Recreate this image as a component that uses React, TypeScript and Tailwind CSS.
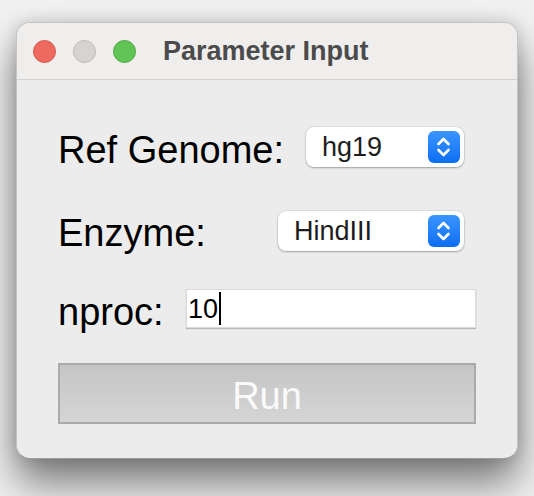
import React from "react";

const Chevrons = () => (
  <svg width="32" height="32" viewBox="0 0 32 32" fill="none">
    <path d="M10.5 13 L15.5 8 L20.5 13" stroke="white" strokeWidth="2.6" strokeLinecap="round" strokeLinejoin="round" />
    <path d="M10.5 19 L15.5 24 L20.5 19" stroke="white" strokeWidth="2.6" strokeLinecap="round" strokeLinejoin="round" />
  </svg>
);

const Popup = ({ value, width }: { value: string; width: string }) => (
  <div
    className={`ml-auto mr-[12px] ${width} h-[40px] flex items-center justify-between bg-white rounded-[8px] shadow-[0_0_0_0.5px_rgba(0,0,0,0.12),0_1px_2px_rgba(0,0,0,0.28)] pl-[16px] pr-[4px]`}
  >
    <span className="text-[27px] leading-none pt-[1px] text-[#1d1d1d]">{value}</span>
    <div className="w-[32px] h-[32px] rounded-[6px] bg-gradient-to-b from-[#3a95ff] to-[#0a6ef2] flex items-center justify-center">
      <Chevrons />
    </div>
  </div>
);

const App = () => {
  return (
    <div className="w-[534px] h-[496px] bg-[#f1f1f1] pt-[22px] pl-[16px] font-['Liberation_Sans',Arial,sans-serif]">
      <div className="w-[502px] h-[437px] rounded-[14px] bg-[#ececec] border border-[#c4c4c4] border-b-[#9c9c9c] overflow-hidden shadow-[0_24px_40px_rgba(0,0,0,0.5),0_0_16px_rgba(0,0,0,0.14)] flex flex-col">
        <div className="h-[57px] bg-[#efeeed] border-b border-[#d2d2d2] flex items-center pl-[16px]">
          <div className="flex gap-[17px]">
            <span className="w-[23px] h-[23px] rounded-full bg-[#ee6a5f] border border-[#d4574c]" />
            <span className="w-[23px] h-[23px] rounded-full bg-[#d5d4d3] border border-[#bcbbba]" />
            <span className="w-[23px] h-[23px] rounded-full bg-[#61c454] border border-[#4fa843]" />
          </div>
          <span className="ml-[27px] text-[27px] font-bold leading-none text-[#4b4b4b]">Parameter Input</span>
        </div>

        <div className="flex flex-col px-[41px] pt-[47px]">
          <div className="flex items-center h-[40px]">
            <span className="text-[38px] leading-none pt-[6px] text-black">Ref Genome:</span>
            <Popup value="hg19" width="w-[158px]" />
          </div>

          <div className="flex items-center h-[40px] mt-[44px]">
            <span className="text-[38px] leading-none pt-[4px] text-black">Enzyme:</span>
            <Popup value="HindIII" width="w-[186px]" />
          </div>

          <div className="flex items-center h-[39px] mt-[38px]">
            <span className="text-[38px] leading-none pt-[6px] text-black">nproc:</span>
            <div className="ml-auto w-[290px] h-[39px] bg-white border border-[#dadada] shadow-[0_1px_1px_rgba(0,0,0,0.22)] flex items-center pl-[1px]">
              <span className="text-[27px] leading-none pt-[2px] text-black">10</span>
              <span className="w-[2px] h-[33px] bg-black ml-[1px]" />
            </div>
          </div>

          <div className="mt-[35px] h-[61px] border-2 border-[#aaaaaa] bg-gradient-to-b from-[#c5c5c5] to-[#d5d5d5] flex items-center justify-center">
            <span className="text-[38px] leading-none pt-[4px] text-[#fafafa]">Run</span>
          </div>
        </div>
      </div>
    </div>
  );
};

export default App;
